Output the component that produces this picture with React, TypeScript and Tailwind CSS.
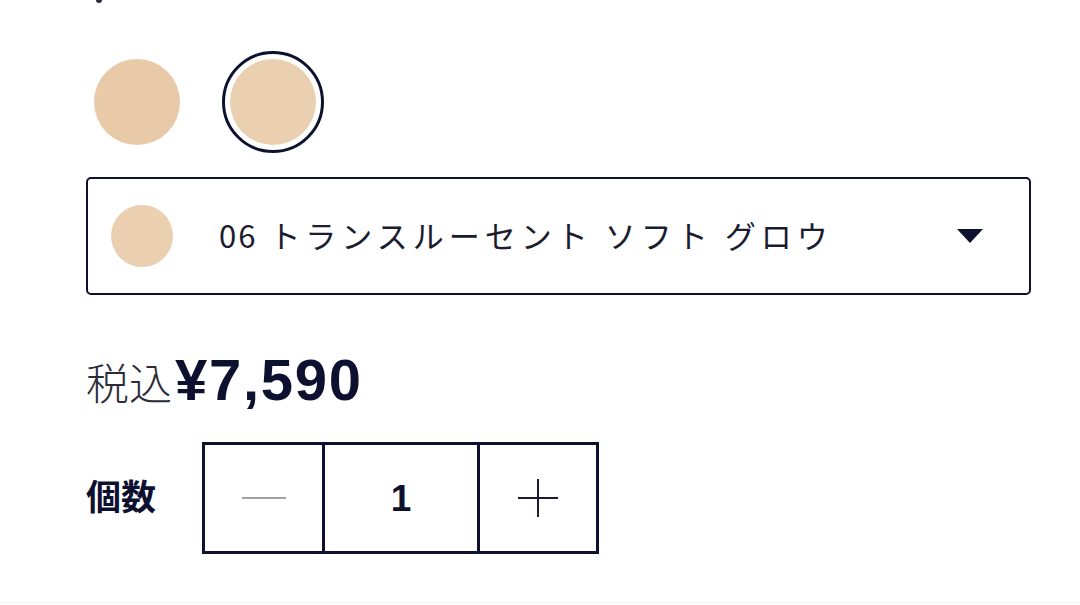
import { useState } from "react";

const navy = "#0e1030";

interface Shade {
  id: string;
  name: string;
  color: string;
}

const shades: Shade[] = [
  { id: "05", name: "トランスルーセント ソフト ベージュ", color: "#e8c9a8" },
  { id: "06", name: "トランスルーセント ソフト グロウ", color: "#ead0b0" },
];

function Swatch({ shade, selected, onPick }: { shade: Shade; selected: boolean; onPick: () => void }) {
  return (
    <button
      type="button"
      onClick={onPick}
      className={
        "flex h-[102px] w-[102px] items-center justify-center rounded-full border-[3px] " +
        (selected ? "border-[#0e1030]" : "border-transparent")
      }
    >
      <span className="block h-[86px] w-[86px] rounded-full" style={{ backgroundColor: shade.color }} />
    </button>
  );
}

export default function App() {
  const [picked, setPicked] = useState(1);
  const [qty, setQty] = useState(1);
  const current = shades[picked];

  return (
    <div
      className="relative h-[603px] overflow-hidden border-b border-[#efefef] bg-white pl-[86px] pr-[49px]"
      style={{ fontFamily: '"Noto Sans CJK JP", "Noto Sans", sans-serif', color: navy }}
    >
      <span className="absolute left-[96px] top-0 block h-[3px] w-[6px] rounded-b-full bg-[#2a2b40]" />

      <div className="flex gap-[34px] pt-[51px]">
        {shades.map((s, i) => (
          <Swatch key={s.id} shade={s} selected={i === picked} onPick={() => setPicked(i)} />
        ))}
      </div>

      <button
        type="button"
        className="mt-[24px] flex h-[118px] w-full items-center rounded-[5px] border-2 border-[#0e1030] pl-[23px] pr-[46px] text-left"
      >
        <span className="block h-[62px] w-[62px] shrink-0 rounded-full" style={{ backgroundColor: current.color }} />
        <span className="mb-[4px] ml-[46px] flex-1 text-[31px] leading-none tracking-[5px] text-[#1b1c30]">
          <span className="tracking-[2px]">{current.id}</span> {current.name}
        </span>
        <svg width="26" height="14" viewBox="0 0 26 14" className="shrink-0">
          <path d="M0 0 H26 L13 14 Z" fill="#0e1030" />
        </svg>
      </button>

      <div className="mt-[56px] flex items-baseline leading-none">
        <span className="text-[43px] font-light text-[#2c2c36]">税込</span>
        <span
          className="ml-[3px] text-[58px] font-bold tracking-[0.03em]"
          style={{ fontFamily: '"Liberation Sans", Arial, sans-serif' }}
        >
          ¥7,590
        </span>
      </div>

      <div className="mt-[33px] flex items-center">
        <span className="mb-[8px] w-[116px] text-[35px] font-bold leading-none">個数</span>
        <div className="flex h-[112px] border-[3px] border-[#0e1030]">
          <button
            type="button"
            onClick={() => setQty(Math.max(1, qty - 1))}
            className="flex w-[117px] items-center justify-center"
          >
            <span className="block h-[2px] w-[44px] bg-[#a0a0a6]" />
          </button>
          <div
            className="flex w-[158px] items-center justify-center border-x-[3px] border-[#0e1030] text-[37px] font-bold leading-none"
            style={{ fontFamily: '"Liberation Sans", Arial, sans-serif' }}
          >
            {qty}
          </div>
          <button
            type="button"
            onClick={() => setQty(qty + 1)}
            className="flex w-[116px] items-center justify-center"
          >
            <svg width="40" height="40" viewBox="0 0 40 40">
              <path d="M0 20 H40 M20 1 V39" stroke="#1b1c30" strokeWidth="2" />
            </svg>
          </button>
        </div>
      </div>
    </div>
  );
}
